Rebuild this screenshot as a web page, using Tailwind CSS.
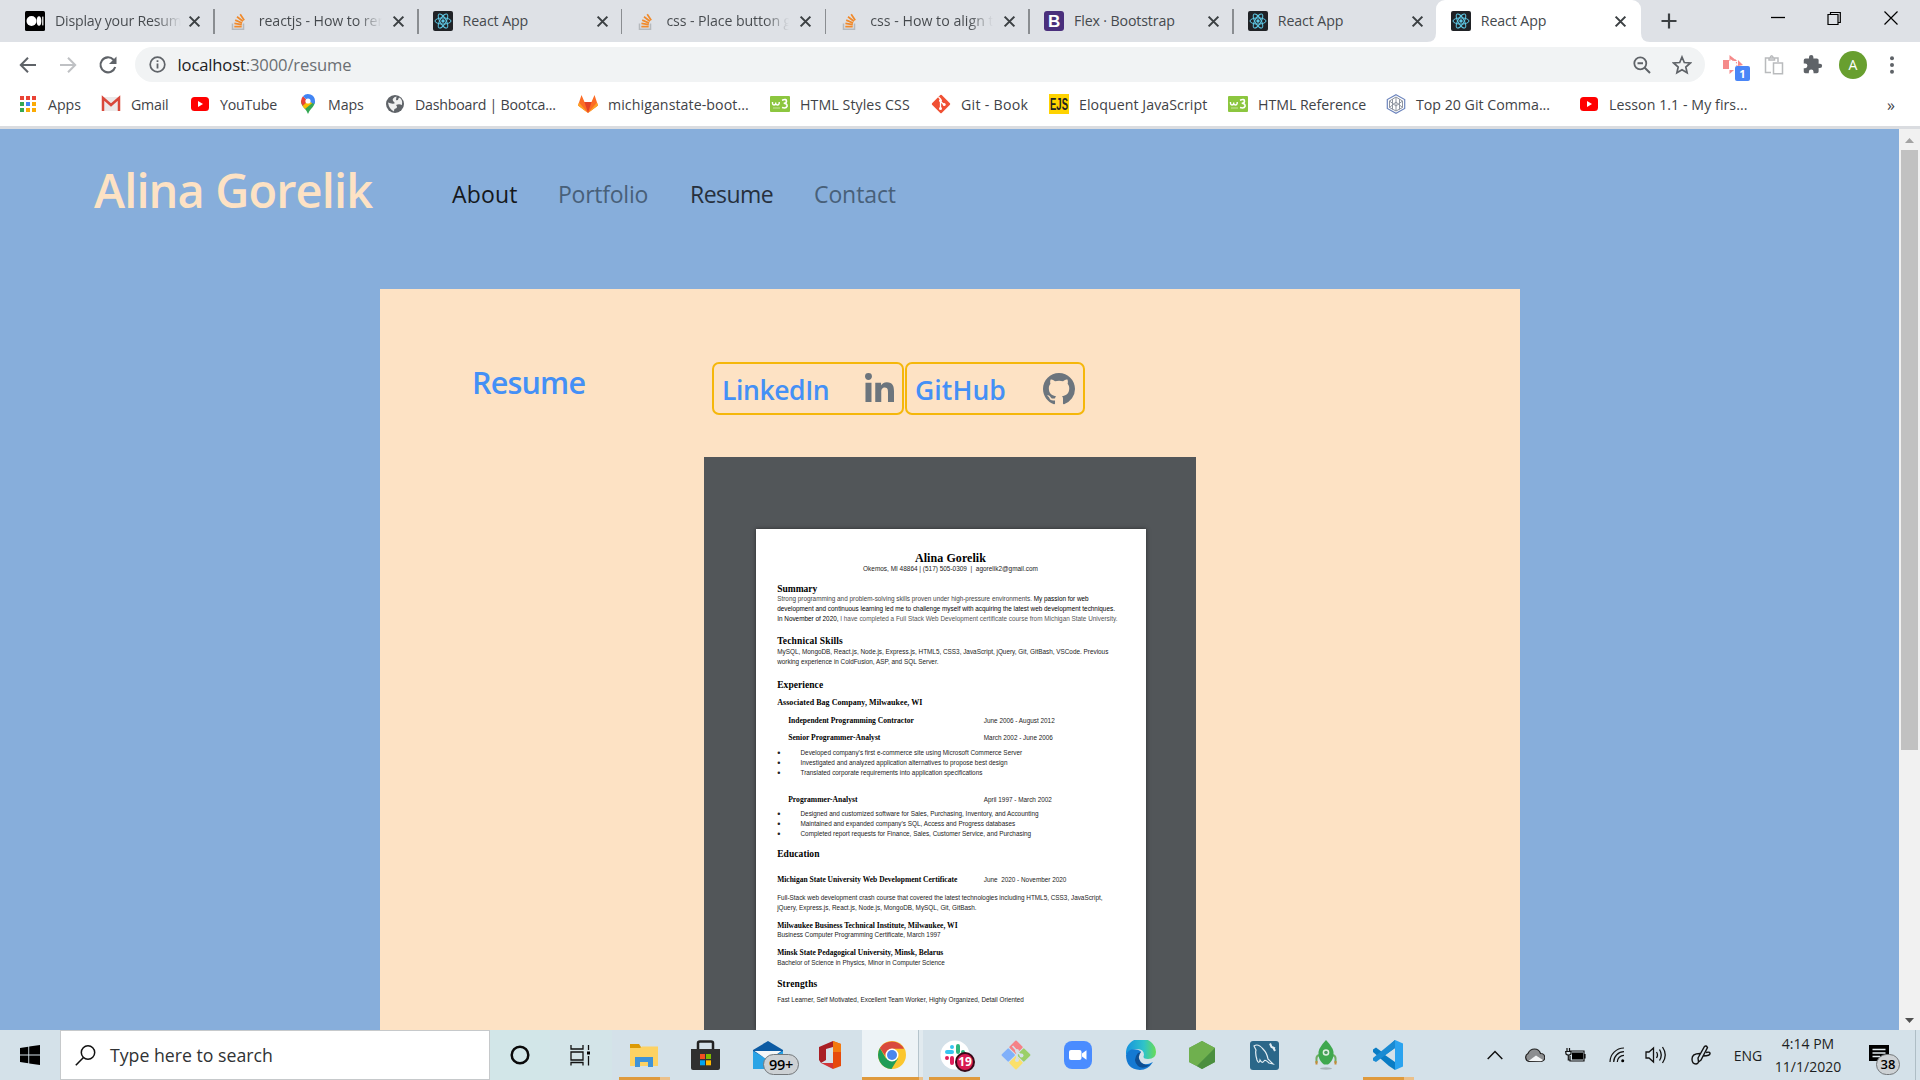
<!DOCTYPE html>
<html lang="en">
<head>
<meta charset="utf-8">
<title>React App</title>
<script src="https://cdn.jsdelivr.net/npm/@tailwindcss/browser@4"></script>
</head>
<body class="w-[1920px] h-[1080px] overflow-hidden flex flex-col font-['Open_Sans',sans-serif] bg-white">

<svg class="hidden">
  <defs>
    <symbol id="react" viewBox="0 0 20 20"><rect width="20" height="20" rx="2" fill="#202226"/><g fill="none" stroke="#5fc9e6" stroke-width="1"><ellipse cx="10" cy="10" rx="8" ry="3.1"/><ellipse cx="10" cy="10" rx="8" ry="3.1" transform="rotate(60 10 10)"/><ellipse cx="10" cy="10" rx="8" ry="3.1" transform="rotate(120 10 10)"/></g><circle cx="10" cy="10" r="1.7" fill="#5fc9e6"/></symbol>
    <symbol id="so" viewBox="0 0 20 20"><path d="M3.500 12.500V18.300H14.500V12.500" fill="none" stroke="#b5b9bd" stroke-width="1.500"/><g stroke="#f08a2c" stroke-width="1.700"><path d="M5.300 15.600H12.700M5.400 12.400L12.800 13.600M6.200 9.100L13.100 12M8 5.800L13.900 10.300M11.200 3.200L15.200 9.200"/></g></symbol>
    <symbol id="x" viewBox="0 0 12 12"><path d="M1.500 1.500L10.500 10.500M10.500 1.500L1.500 10.500" stroke="#3c4043" stroke-width="1.900"/></symbol>
    <symbol id="w3" viewBox="0 0 20 20"><rect y="2" width="20" height="16" rx="1" fill="#8cc63f"/><path d="M2.500 8V9.300Q2.500 11 4 11T5.700 9.300V8.500V9.300Q5.700 11 7.300 11T9.200 9.300V8" fill="none" stroke="#fff" stroke-width="1.400"/><path d="M12 6.200Q16.700 4.500 16.500 7.300Q16.200 9.300 13.700 9.300Q17.400 9.500 17.100 12.300Q16.200 14.800 12 13.600" fill="none" stroke="#fff" stroke-width="1.600"/><path d="M3 14H10" stroke="#c6e39d"/></symbol>
    <symbol id="yt" viewBox="0 0 20 20"><rect x="1" y="3" width="18" height="14" rx="3.500" fill="#f00"/><path d="M8 7V13L13 10Z" fill="#fff"/></symbol>
  </defs>
</svg>

<!-- tab strip -->
<div class="h-[42px] bg-[#dee1e6] flex pl-[11px] text-[14.2px] tracking-[-0.1px] text-[#45494d] shrink-0">
  <div class="w-[203.8px] flex items-center pl-[14px] relative">
    <svg class="size-5 shrink-0" viewBox="0 0 20 20"><rect width="20" height="20" rx="1.500"/><circle cx="6.500" cy="10" r="5" fill="#fff"/><ellipse cx="14" cy="10" rx="2.300" ry="4.700" fill="#fff"/><rect x="17.200" y="5.600" width="1.200" height="8.800" fill="#fff"/></svg>
    <span class="ml-[10px] w-[126px] tracking-[-0.23px] overflow-hidden whitespace-nowrap bg-gradient-to-r from-[#45494d] from-80% to-transparent bg-clip-text text-transparent">Display your Resume</span>
    <svg class="size-[13px] ml-[7px] shrink-0"><use href="#x"/></svg><i class="absolute right-0 top-[9px] w-[1.500px] h-[25px] bg-[#8a8d91]"></i>
  </div>
  <div class="w-[203.8px] flex items-center pl-[14px] relative">
    <svg class="size-5 shrink-0"><use href="#so"/></svg>
    <span class="ml-[10px] w-[123px] overflow-hidden whitespace-nowrap bg-gradient-to-r from-[#45494d] from-80% to-transparent bg-clip-text text-transparent">reactjs - How to render</span>
    <svg class="size-[13px] ml-[10px] shrink-0"><use href="#x"/></svg><i class="absolute right-0 top-[9px] w-[1.500px] h-[25px] bg-[#8a8d91]"></i>
  </div>
  <div class="w-[203.8px] flex items-center pl-[14px] relative">
    <svg class="size-5 shrink-0"><use href="#react"/></svg>
    <span class="ml-[10px] w-[124px]">React App</span>
    <svg class="size-[13px] ml-[9px] shrink-0"><use href="#x"/></svg><i class="absolute right-0 top-[9px] w-[1.500px] h-[25px] bg-[#8a8d91]"></i>
  </div>
  <div class="w-[203.8px] flex items-center pl-[14px] relative">
    <svg class="size-5 shrink-0"><use href="#so"/></svg>
    <span class="ml-[10px] w-[123px] overflow-hidden whitespace-nowrap bg-gradient-to-r from-[#45494d] from-80% to-transparent bg-clip-text text-transparent">css - Place button go</span>
    <svg class="size-[13px] ml-[10px] shrink-0"><use href="#x"/></svg><i class="absolute right-0 top-[9px] w-[1.500px] h-[25px] bg-[#8a8d91]"></i>
  </div>
  <div class="w-[203.8px] flex items-center pl-[14px] relative">
    <svg class="size-5 shrink-0"><use href="#so"/></svg>
    <span class="ml-[10px] w-[123px] tracking-[0px] overflow-hidden whitespace-nowrap bg-gradient-to-r from-[#45494d] from-80% to-transparent bg-clip-text text-transparent">css - How to align the</span>
    <svg class="size-[13px] ml-[10px] shrink-0"><use href="#x"/></svg><i class="absolute right-0 top-[9px] w-[1.500px] h-[25px] bg-[#8a8d91]"></i>
  </div>
  <div class="w-[203.8px] flex items-center pl-[14px] relative">
    <svg class="size-5 shrink-0" viewBox="0 0 20 20"><rect width="20" height="20" rx="3" fill="#4a2f7c"/><text x="10" y="16" text-anchor="middle" font-family="Liberation Sans" font-weight="700" font-size="17" fill="#fff">B</text></svg>
    <span class="ml-[10px] w-[124px] tracking-[-0.13px]">Flex · Bootstrap</span>
    <svg class="size-[13px] ml-[9px] shrink-0"><use href="#x"/></svg><i class="absolute right-0 top-[9px] w-[1.500px] h-[25px] bg-[#8a8d91]"></i>
  </div>
  <div class="w-[202px] flex items-center pl-[14px]">
    <svg class="size-5 shrink-0"><use href="#react"/></svg>
    <span class="ml-[10px] w-[124px]">React App</span>
    <svg class="size-[13px] ml-[9px] shrink-0"><use href="#x"/></svg>
  </div>
  <div class="w-[205px] flex items-center pl-[15px] bg-white rounded-t-[9px] relative">
    <svg class="absolute bottom-0 -left-[9px] size-[9px]" viewBox="0 0 9 9"><path d="M9 0V9H0Q9 9 9 0Z" fill="#fff"/></svg>
    <svg class="absolute bottom-0 -right-[9px] size-[9px]" viewBox="0 0 9 9"><path d="M0 0V9H9Q0 9 0 0Z" fill="#fff"/></svg>
    <svg class="size-5 shrink-0"><use href="#react"/></svg>
    <span class="ml-[10px] w-[124px]">React App</span>
    <svg class="size-[13px] ml-[9px] shrink-0"><use href="#x"/></svg>
  </div>
  <svg class="size-4 ml-[20px] mt-[13px]" viewBox="0 0 16 16"><path d="M8 .5V15.500M.5 8H15.500" stroke="#3c4043" stroke-width="2.200"/></svg>
  <div class="ml-auto flex pt-[10px] pr-[22px] gap-[42px]">
    <svg class="w-[14px] h-[16px]" viewBox="0 0 14 16"><path d="M0 7.500H14" stroke="#000" stroke-width="1.300"/></svg>
    <svg class="w-[15px] h-[16px]" viewBox="0 0 15 16"><path d="M1 4.500H11V14.500H1ZM3.500 4.500V2.500H13.300V12.500H11" fill="none" stroke="#000" stroke-width="1.200"/></svg>
    <svg class="w-[14px] h-[16px]" viewBox="0 0 14 16"><path d="M.5 1.500L13.500 14.500M13.500 1.500L.5 14.500" stroke="#000" stroke-width="1.200"/></svg>
  </div>
</div>

<!-- address bar -->
<div class="h-[45px] flex items-center pl-[19px] shrink-0">
  <svg class="size-[18px]" viewBox="0 0 18 18"><path d="M17 9H2M9 1.800L1.800 9L9 16.200" fill="none" stroke="#5f6368" stroke-width="2"/></svg>
  <svg class="size-[18px] ml-[22px]" viewBox="0 0 18 18"><path d="M1 9H16M9 1.800L16.200 9L9 16.200" fill="none" stroke="#bfc1c4" stroke-width="2"/></svg>
  <svg class="size-[20px] ml-[21px]" viewBox="0 0 20 20"><path d="M17.200 12A7.500 7.500 0 1 1 15.500 4.700L17 6.300" fill="none" stroke="#5f6368" stroke-width="2.100"/><path d="M18.500 1.500V9H11Z" fill="#5f6368"/></svg>
  <div class="ml-[17px] w-[1570px] h-[35px] rounded-full bg-[#f1f3f4] flex items-center pl-[14px] pr-[13px]">
    <svg class="size-[17px]" viewBox="0 0 17 17"><circle cx="8.500" cy="8.500" r="7.300" fill="none" stroke="#5f6368" stroke-width="1.700"/><path d="M8.500 7.500V12.500M8.500 4.300V6" stroke="#5f6368" stroke-width="1.800"/></svg>
    <span class="ml-[11.500px] mt-px text-[16.6px] tracking-[-0.14px] text-[#6b6f73]"><span class="text-[#202124]">localhost</span>:3000/resume</span>
    <svg class="ml-auto size-[18px]" viewBox="0 0 18 18"><circle cx="7.300" cy="7.300" r="6" fill="none" stroke="#5f6368" stroke-width="1.800"/><path d="M11.500 11.500L17 17M4.500 7.300H10" stroke="#5f6368" stroke-width="2"/></svg>
    <svg class="ml-[21px] size-[20px]" viewBox="0 0 20 20"><path d="M10 2L12.300 7.500L18.300 8L13.800 12L15.100 17.800L10 14.700L4.900 17.800L6.200 12L1.700 8L7.700 7.500Z" fill="none" stroke="#5f6368" stroke-width="1.700"/></svg>
  </div>
  <div class="relative ml-[17px] size-[22px]">
    <svg class="size-[22px]" viewBox="0 0 22 22"><path d="M1 6H7V15H1ZM7.500 1L15 7H12L7.500 5ZM7.500 20V16H12ZM16 6L21 11L16 12Z" fill="#f58a8a"/><path d="M7 6L14 6L15 12" fill="none" stroke="#f58a8a" stroke-width="1" stroke-dasharray="1.500 1.500"/></svg>
    <span class="absolute left-[13px] top-[12px] w-[15px] h-[15px] rounded-[2px] bg-[#4a86f7] text-white text-[11px] font-bold leading-[15px] text-center">1</span>
  </div>
  <svg class="ml-[20px] size-[20px]" viewBox="0 0 20 20"><path d="M7 17.500H1.500V3H14V7M5 3V5H10.500V3M6 3Q7.500 -1.500 9.500 3M9.500 8H18.500V18.800H9.500Z" fill="none" stroke="#b9bbbd" stroke-width="1.500"/></svg>
  <svg class="ml-[18px] size-[21px]" viewBox="0 0 24 24"><path fill="#5f6368" d="M20.500 11H19V7c0-1.100-.9-2-2-2h-4V3.500a2.500 2.500 0 0 0-5 0V5H4a2 2 0 0 0-2 2v3.800h1.500a2.700 2.700 0 0 1 0 5.400H2V20c0 1.100.9 2 2 2h3.800v-1.500a2.700 2.700 0 0 1 5.400 0V22H17a2 2 0 0 0 2-2v-4h1.500a2.500 2.500 0 0 0 0-5z"/></svg>
  <span class="ml-[16px] size-7 rounded-full bg-[#689f2f] text-white text-[14px] leading-7 text-center">A</span>
  <svg class="ml-[22px] w-[6px] h-[18px]" viewBox="0 0 6 18"><g fill="#5f6368"><circle cx="3" cy="2.300" r="2"/><circle cx="3" cy="9" r="2"/><circle cx="3" cy="15.700" r="2"/></g></svg>
</div>

<!-- bookmarks bar -->
<div class="h-[42px] flex items-center pl-[18px] pb-[4px] text-[14.2px] text-[#3f4347] border-b-3 border-[#dadce0] whitespace-nowrap shrink-0">
  <div class="w-[83px] flex items-center gap-[10px]"><svg class="size-5 shrink-0" viewBox="0 0 20 20"><path d="M2 2h4v4H2zM8 2h4v4H8zM14 2h4v4h-4z" fill="#ea4335"/><path d="M2 8h4v4H2zM2 14h4v4H2z" fill="#34a853"/><path d="M8 8h4v4H8z" fill="#4285f4"/><path d="M14 8h4v4h-4zM8 14h4v4H8zM14 14h4v4h-4z" fill="#fbab05"/></svg><span class="tracking-[-0.05px]">Apps</span></div>
  <div class="w-[89px] flex items-center gap-[10px] tracking-[-0.2px]"><svg class="size-5 shrink-0" viewBox="0 0 20 20"><rect x="1" y="3" width="18" height="14" fill="#eceaea"/><path d="M2 17V4L10 11L18 4V17" fill="none" stroke="#d9483b" stroke-width="2.500"/></svg><span>Gmail</span></div>
  <div class="w-[108px] flex items-center gap-[10px] tracking-[-0.2px]"><svg class="size-5 shrink-0"><use href="#yt"/></svg><span>YouTube</span></div>
  <div class="w-[87px] flex items-center gap-[10px] tracking-[-0.1px]"><svg class="size-5 shrink-0" viewBox="0 0 20 20"><path d="M3 7Q3 11 7 15Q9 17 10 20Q11 17 13 15Q17 11 17 7Z" fill="#34a853"/><path d="M3 7A7 7 0 0 1 5 2.200L10 7L5 12Q3 10 3 7Z" fill="#ea4335"/><path d="M10 7L4.500 12L7 15L15.500 8Z" fill="#fbbc04"/><path d="M5 2.200A7 7 0 0 1 17 7Q17 8.500 16.300 10L10 7Z" fill="#4285f4"/><circle cx="10" cy="7" r="2.600" fill="#fff"/></svg><span>Maps</span></div>
  <div class="w-[193px] flex items-center gap-[10px] tracking-[-0.23px]"><svg class="size-5 shrink-0" viewBox="0 0 20 20"><circle cx="10" cy="10" r="9" fill="#5f6368"/><path d="M11.500 2.500Q6.500 4 8 7Q10 8 9.500 9.500Q6 10 3 8.500Q4 15 9 17.500Q9 14 11 14.500Q13 13 11 11Q14 9.500 17 11Q18 5 14 3.500Q13 7 11 6Z" fill="#fff" opacity=".9"/></svg><span>Dashboard | Bootca...</span></div>
  <div class="w-[192px] flex items-center gap-[10px] tracking-[0.07px]"><svg class="size-5 shrink-0" viewBox="0 0 20 20"><path d="M10 19L0 11.500L3.500 1L6.500 8H13.500L16.500 1L20 11.500Z" fill="#fc6d26"/><path d="M10 19L6.500 8H13.500Z" fill="#e24329"/><path d="M10 19L0 11.500L1 8.500ZM10 19L20 11.500L19 8.500Z" fill="#fca326"/></svg><span>michiganstate-boot...</span></div>
  <div class="w-[161px] flex items-center gap-[10px] tracking-[0.08px]"><svg class="size-5 shrink-0"><use href="#w3"/></svg><span>HTML Styles CSS</span></div>
  <div class="w-[118px] flex items-center gap-[10px] tracking-[0.27px]"><svg class="size-5 shrink-0" viewBox="0 0 20 20"><rect x="3.200" y="3.200" width="13.600" height="13.600" rx="1" transform="rotate(45 10 10)" fill="#f05033"/><path d="M7.500 3L9.500 5V15M9.500 7.500L13 10.500" fill="none" stroke="#fff" stroke-width="1.300"/><g fill="#fff"><circle cx="9.500" cy="6.500" r="1.500"/><circle cx="9.500" cy="14.500" r="1.500"/><circle cx="13.200" cy="10.500" r="1.500"/></g></svg><span>Git - Book</span></div>
  <div class="w-[179px] flex items-center gap-[10px] tracking-[0.06px]"><svg class="size-5 shrink-0" viewBox="0 0 20 20"><rect width="20" height="20" fill="#ffd300"/><text x="10" y="15.800" text-anchor="middle" textLength="18" lengthAdjust="spacingAndGlyphs" font-family="Liberation Sans" font-weight="700" font-size="16.500" fill="#222">EJS</text></svg><span>Eloquent JavaScript</span></div>
  <div class="w-[158px] flex items-center gap-[10px] tracking-[-0.05px]"><svg class="size-5 shrink-0"><use href="#w3"/></svg><span>HTML Reference</span></div>
  <div class="w-[193px] flex items-center gap-[10px]"><svg class="size-5 shrink-0" viewBox="0 0 20 20"><path d="M10 .8L18.700 5.500V14.500L10 19.200L1.300 14.500V5.500Z" fill="none" stroke="#6d85bd" stroke-width="1.200"/><path d="M10 3L16.500 7V13.500L10 17L3.500 13.500V7ZM10 3V17M3.500 7L10 12L16.500 7M3.500 13.500L10 8L16.500 13.500M6.500 5V15.500M13.500 5V15.500" fill="none" stroke="#8f959f" stroke-width="1"/></svg><span>Top 20 Git Comma...</span></div>
  <div class="flex items-center gap-[10px] tracking-[0.05px]"><svg class="size-5 shrink-0"><use href="#yt"/></svg><span>Lesson 1.1 - My firs...</span></div>
  <span class="ml-auto mr-[25px] text-[16px] leading-4">»</span>
</div>

<!-- page -->
<div class="flex-1 flex min-h-0">
  <main class="w-[1899px] bg-[#87aedb] overflow-hidden flex flex-col items-center">
    <nav class="w-full h-[160px] flex items-start pl-[94px] shrink-0">
      <h1 class="w-[358px] mt-[31px] leading-[60px] text-[47px] font-semibold tracking-[-0.9px] text-[#fde2c4]">Alina Gorelik</h1>
      <div class="flex mt-[45px] leading-[40px] text-[23px]">
        <a class="w-[106px] text-[#15181c] tracking-[0.2px]">About</a>
        <a class="w-[132px] text-[#486079] tracking-[-0.25px]">Portfolio</a>
        <a class="w-[124px] text-[#26303d] tracking-[-0.56px]">Resume</a>
        <a class="text-[#486079] tracking-[-0.1px]">Contact</a>
      </div>
    </nav>
    <section class="ml-[1px] w-[1140px] h-[741px] bg-[#fde2c4] flex flex-col items-center shrink-0">
      <div class="w-full h-[168px] flex items-start pl-[92px] shrink-0 font-semibold text-[#4490f6]">
        <h2 class="w-[240px] mt-[73px] leading-[40px] text-[30.5px] tracking-[-0.8px]">Resume</h2>
        <div class="flex gap-px mt-[73px] text-[26.500px]">
          <a class="w-[192px] h-[53px] rounded-[7px] border-2 border-[#f5b70a] flex pl-[8px] pr-[8px] justify-between">
            <span class="leading-[53px] h-[49px] tracking-[-0.4px]">LinkedIn</span>
            <svg class="w-[29px] h-[29px] mt-[9px]" viewBox="0 0 448 448" fill="#6c757d"><path d="M100.280 448H7.400V148.900h92.880zM53.790 108.100C24.090 108.100 0 83.500 0 53.800a53.790 53.790 0 0 1 107.580 0c0 29.700-24.100 54.300-53.790 54.300zM447.900 448h-92.680V302.400c0-34.700-.7-79.200-48.290-79.200-48.290 0-55.690 37.700-55.690 76.700V448h-92.780V148.900h89.080v40.800h1.300c12.400-23.500 42.690-48.300 87.880-48.300 94 0 111.280 61.900 111.280 142.300V448z"/></svg>
          </a>
          <a class="w-[180px] h-[53px] rounded-[7px] border-2 border-[#f5b70a] flex pl-[8px] pr-[8px] justify-between">
            <span class="leading-[53px] h-[49px] tracking-[0.1px]">GitHub</span>
            <svg class="w-[32px] h-[32px] mt-[9px]" viewBox="0 0 16 16" fill="#6c757d"><path d="M8 0C3.580 0 0 3.580 0 8c0 3.540 2.290 6.530 5.470 7.590.4.070.55-.17.55-.38 0-.19-.01-.82-.01-1.490-2.010.37-2.530-.49-2.690-.94-.09-.23-.48-.94-.82-1.130-.28-.15-.68-.52-.01-.53.63-.01 1.080.58 1.230.82.72 1.210 1.870.87 2.330.66.070-.52.28-.87.51-1.070-1.780-.2-3.640-.89-3.640-3.950 0-.87.31-1.590.82-2.150-.08-.2-.36-1.020.08-2.120 0 0 .67-.21 2.200.82.64-.18 1.320-.27 2-.27s1.360.09 2 .27c1.530-1.040 2.200-.82 2.200-.82.44 1.100.16 1.920.08 2.120.51.56.82 1.270.82 2.150 0 3.070-1.870 3.750-3.650 3.950.29.25.54.73.54 1.480 0 1.070-.01 1.930-.01 2.200 0 .21.15.46.55.38A8.010 8.010 0 0 0 16 8c0-4.420-3.580-8-8-8z"/></svg>
          </a>
        </div>
      </div>
      <!-- embedded document -->
      <div class="w-[492px] flex-1 bg-[#525659] pt-[72px] flex justify-center">
        <article class="w-[390px] ml-[1px] bg-white shadow-[0_0_4px_rgba(0,0,0,.5)] pt-[24px] pl-[21.700px] font-['Liberation_Sans',sans-serif] text-[6.380px] leading-[10px] text-[#222] [&_b]:whitespace-pre [&_p]:whitespace-pre [&_b]:block [&_b]:h-[10px] [&_b]:text-black [&_b]:font-['Liberation_Serif',serif] [&_p]:h-[10px]">
          <b class="-ml-[21.700px] text-center text-[12px] tracking-[0.07px]">Alina Gorelik</b>
          <p class="-ml-[21.700px] text-center mt-[0.500px] text-[6.460px]">Okemos, MI 48864 | (517) 505-0309  |  agorelik2@gmail.com</p>
          <b class="mt-[10px] text-[9.500px]">Summary</b>
          <p class="text-[#444]">Strong programming and problem-solving skills proven under high-pressure environments. <span class="text-black">My passion for web</span></p>
          <p class="text-black">development and continuous learning led me to challenge myself with acquiring the latest web development techniques.</p>
          <p class="text-[#555]"><span class="text-black">In November of 2020,</span> I have completed a Full Stack Web Development certificate course from Michigan State University.</p>
          <b class="mt-[12px] text-[9.500px] tracking-[0.15px]">Technical Skills</b>
          <p class="mt-[1.500px]">MySQL, MongoDB, React.js, Node.js, Express.js, HTML5, CSS3, JavaScript, jQuery, Git, GitBash, VSCode. Previous</p>
          <p>working experience in ColdFusion, ASP, and SQL Server.</p>
          <b class="mt-[13px] text-[9.500px] tracking-[0.06px]">Experience</b>
          <b class="mt-[8px] text-[8px] tracking-[0.05px]">Associated Bag Company, Milwaukee, WI</b>
          <div class="mt-[7.500px] flex pl-[11px]"><b class="w-[195.600px] text-[7.550px]">Independent Programming Contractor</b><p>June 2006 - August 2012</p></div>
          <div class="mt-[7px] flex pl-[11px]"><b class="w-[195.600px] text-[7.620px]">Senior Programmer-Analyst</b><p>March 2002 - June 2006</p></div>
          <div class="mt-[5px] flex"><p class="w-[23.300px] text-[9px]">•</p><p>Developed company’s first e-commerce site using Microsoft Commerce Server</p></div>
          <div class="flex"><p class="w-[23.300px] text-[9px]">•</p><p>Investigated and analyzed application alternatives to propose best design</p></div>
          <div class="flex"><p class="w-[23.300px] text-[9px]">•</p><p>Translated corporate requirements into application specifications</p></div>
          <div class="mt-[17px] flex pl-[11px]"><b class="w-[195.600px] text-[7.620px]">Programmer-Analyst</b><p>April 1997 - March 2002</p></div>
          <div class="mt-[4px] flex"><p class="w-[23.300px] text-[9px]">•</p><p>Designed and customized software for Sales, Purchasing, Inventory, and Accounting</p></div>
          <div class="flex"><p class="w-[23.300px] text-[9px]">•</p><p>Maintained and expanded company’s SQL, Access and Progress databases</p></div>
          <div class="flex"><p class="w-[23.300px] text-[9px]">•</p><p>Completed report requests for Finance, Sales, Customer Service, and Purchasing</p></div>
          <b class="mt-[10px] text-[9.500px] tracking-[0.07px]">Education</b>
          <div class="mt-[16px] flex"><b class="w-[206.600px] text-[7.500px]">Michigan State University Web Development Certificate</b><p>June  2020 - November 2020</p></div>
          <p class="mt-[8.500px]">Full-Stack web development crash course that covered the latest technologies including HTML5, CSS3, JavaScript,</p>
          <p>jQuery, Express.js, React.js, Node.js, MongoDB, MySQL, Git, GitBash.</p>
          <b class="mt-[8px] text-[7.560px]">Milwaukee Business Technical Institute, Milwaukee, WI</b>
          <p class="-mt-px">Business Computer Programming Certificate, March 1997</p>
          <b class="mt-[8px] text-[7.500px]">Minsk State Pedagogical University, Minsk, Belarus</b>
          <p>Bachelor of Science in Physics, Minor in Computer Science</p>
          <b class="mt-[11px] text-[9.500px] tracking-[0.15px]">Strengths</b>
          <p class="mt-[6px]">Fast Learner, Self Motivated, Excellent Team Worker, Highly Organized, Detail Oriented</p>
        </article>
      </div>
    </section>
  </main>
  <div class="w-[21px] bg-[#f1f1f1] flex flex-col items-center justify-between pt-[9px] pb-[7px]">
    <div class="flex flex-col items-center w-full">
      <svg class="w-[9px] h-[5px]" viewBox="0 0 9 5"><path d="M0 5L4.500 0L9 5Z" fill="#a3a3a3"/></svg>
      <i class="mt-[7px] w-[17px] h-[600px] bg-[#c1c1c1]"></i>
    </div>
    <svg class="w-[9px] h-[5px]" viewBox="0 0 9 5"><path d="M0 0L4.500 5L9 0Z" fill="#505050"/></svg>
  </div>
</div>

<!-- taskbar -->
<div class="h-[50px] bg-[#d4e1e9] flex items-stretch shrink-0 [&>div]:flex [&>div]:items-center [&>div]:justify-center [&>div]:shrink-0">
  <div class="w-[60px]"><svg class="size-5" viewBox="0 0 20 20"><path d="M0 3L8.300 1.700V9.500H0ZM9.200 1.600L20 0V9.500H9.200ZM0 10.400H8.300V18.300L0 17.100ZM9.200 10.400H20V20L9.200 18.400Z"/></svg></div>
  <div class="w-[430px] bg-white border border-[#c6c9cb] justify-start! pl-[14px]"><svg class="size-[21px]" viewBox="0 0 21 21"><circle cx="13" cy="7.500" r="6.700" fill="none" stroke="#111" stroke-width="1.500"/><path d="M8.500 12.500L.8 20.200" stroke="#111" stroke-width="1.600"/></svg><span class="ml-[14px] text-[17.700px] text-[#303234]">Type here to search</span></div>
  <div class="w-[60px] bg-[#d2e6e8]"><svg class="size-[20px]" viewBox="0 0 20 20"><circle cx="10" cy="10" r="8.300" fill="none" stroke="#0a0a0a" stroke-width="2.500"/></svg></div>
  <div class="w-[62px] bg-[#d3e4e8]"><svg class="size-[21px] -ml-[1px]" viewBox="0 0 21 21"><path d="M1 0V4H13V0M1 7H13V15H1ZM1 20.500V17.500H13V20.500M18.500 0V5M18.500 11V20.500" fill="none" stroke="#111" stroke-width="1.300"/><rect x="17" y="6.500" width="3" height="3"/></svg></div>
  <div class="w-[62px] relative"><svg class="w-[28px] h-[24px] ml-[2px]" viewBox="0 0 28 24"><path d="M0 1H9L11 4H27V22H0Z" fill="#dc9a06"/><path d="M0 5H10L12 3.500H28V23H0Z" fill="#fdd263"/><path d="M5 24V14H23V24H18V19H10V24Z" fill="#3f93d8"/></svg><i class="absolute left-[7px] bottom-0 w-[41px] h-[3px] bg-[#df9a3d]"></i><i class="absolute left-[48px] bottom-0 w-[10px] h-[3px] bg-[#ebc08a]"></i></div>
  <div class="w-[62px] pl-[2px]"><svg class="w-[30px] h-[31px]" viewBox="0 0 30 31"><path d="M7 9V3Q7 1.500 9 1.500H20Q22 1.500 22 3V9" fill="none" stroke="#222" stroke-width="2.500"/><path d="M0 9H29V28Q29 30 27 30H2Q0 30 0 28Z" fill="#303030"/><path d="M9 14h5v5H9z" fill="#f25022"/><path d="M15 14h5v5h-5z" fill="#7fba00"/><path d="M9 20.300h5v5H9z" fill="#00a4ef"/><path d="M15 20.300h5v5h-5z" fill="#ffb900"/></svg></div>
  <div class="w-[62px] relative pl-[2px]"><svg class="w-[30px] h-[28px]" viewBox="0 0 30 28"><path d="M0 9L15 0L30 9V28H0Z" fill="#0d5ba3"/><path d="M0 10L15 19L30 10V28H0Z" fill="#2ba4e6"/><path d="M1.500 10H28.500L17 18Q15 19 13 18Z" fill="#f4f7f9"/></svg><span class="absolute left-[27px] top-[24px] w-[36px] h-[21px] rounded-full border border-[#73777a] bg-[#cdd1d4] text-[14.500px] leading-[19px] font-semibold text-center text-black tracking-[-0.3px]">99+</span></div>
  <div class="w-[62px] pl-[2px]"><svg class="w-[24px] h-[30px]" viewBox="0 0 24 30"><path d="M1 7L15 1V7L8 9V20L3 23L1 20Z" fill="#a91e24"/><path d="M15 1L23 4V26L15 29Z" fill="#e64a0c"/><path d="M15 1L23 4V12H15Z" fill="#f37a10"/><path d="M3 23H15V29Z" fill="#d13438"/></svg></div>
  <div class="w-[62px] relative pl-[2px]"><i class="absolute left-[2px] top-0 w-[56px] h-full bg-[#edf3f6]"></i><i class="absolute left-[58px] top-0 w-[5px] h-full bg-[#e1eaef] border-l border-[#b5c4cc]"></i><i class="absolute left-[2px] bottom-0 w-[57px] h-[3px] bg-[#df9a3d]"></i><i class="absolute left-[59px] bottom-0 w-[4px] h-[3px] bg-[#ebc08a]"></i>
    <svg class="size-[28px] relative" viewBox="0 0 28 28"><circle cx="14" cy="14" r="14" fill="#fbc62e"/><path d="M1.900 7A14 14 0 0 0 13.500 28L20 17.500L8 17.500Z" fill="#1f9d57"/><path d="M1.900 7A14 14 0 0 1 26.100 7.700H14A6.300 6.300 0 0 0 8 16Z" fill="#d94a3d"/><circle cx="14" cy="14" r="6.500" fill="#fff"/><circle cx="14" cy="14" r="5" fill="#4a86ee"/></svg></div>
  <div class="w-[62px] relative pl-[3px]"><i class="absolute left-[7px] bottom-0 w-[51px] h-[3px] bg-[#df9a3d]"></i><svg class="size-[30px]" viewBox="0 0 30 30"><circle cx="15" cy="15" r="14.500" fill="#fff"/><g stroke-width="4" stroke-linecap="round"><path d="M12 7V7.010M7 12H12" stroke="#36c5f0"/><path d="M18 6V12M23 12V12.010" stroke="#2eb67d"/><path d="M18 18H23" stroke="#ecb22e"/><path d="M12 18V23M7 18V18.010" stroke="#e01e5a"/></g></svg><span class="absolute left-[33px] top-[22px] size-[20px] rounded-full bg-[#d81b52] border-2 border-[#3a0918] text-white text-[12px] leading-[16px] font-bold text-center">19</span></div>
  <div class="w-[62px] pl-[2px]"><svg class="size-[30px]" viewBox="0 0 30 30"><g transform="rotate(45 15 15)"><rect x="4.500" y="4.500" width="10" height="10" rx="1" fill="#f58286"/><rect x="15.500" y="4.500" width="10" height="10" rx="1" fill="#9bcf69"/><rect x="4.500" y="15.500" width="10" height="10" rx="1" fill="#80b0fa"/><rect x="15.500" y="15.500" width="10" height="10" rx="1" fill="#fbe06a"/></g><path d="M11.500 6L16 11V21M16 12L20 15" fill="none" stroke="#d4e1e9" stroke-width="1.700"/><g fill="#d4e1e9"><circle cx="16" cy="11" r="2"/><circle cx="16" cy="20" r="2"/><circle cx="20.500" cy="15.500" r="2"/></g></svg></div>
  <div class="w-[62px] pl-[2px]"><svg class="size-[28px]" viewBox="0 0 28 28"><rect width="28" height="28" rx="8" fill="#4a8cff"/><rect x="5" y="9" width="12.500" height="10" rx="2" fill="#fff"/><path d="M18 12.500L22.500 9.200V18.800L18 15.500Z" fill="#fff"/></svg></div>
  <div class="w-[62px] pl-[3px]"><svg class="size-[30px]" viewBox="0 0 30 30"><defs><linearGradient id="eg"><stop offset="0" stop-color="#1793df"/><stop offset=".6" stop-color="#2fc3c9"/><stop offset="1" stop-color="#69dc55"/></linearGradient></defs><path d="M0 13A15 14 0 0 1 30 12Q30 19 22 19Q16 19 18 15Q18 9 11 9Q4 9 0 15Z" fill="url(#eg)"/><path d="M0 15Q3 8 10 9.500Q14 10 15 12Q9 15 13 21Q18 27 27 22Q22 30 14 30Q0 29 0 15Z" fill="#1479d2"/><path d="M12 13Q6 20 12 26Q17 30 25 24.500Q18 26 14.500 21.500Q11 17 15 12Z" fill="#0d4f94"/></svg></div>
  <div class="w-[62px] pl-[2px]"><svg class="w-[26px] h-[28px]" viewBox="0 0 26 28"><path d="M13 0L26 7V21L13 28L0 21V7Z" fill="#5fa04e"/><path d="M13 0L26 7L8 25L0 21V7Z" fill="#6fb04e"/><path d="M26 7V21L13 28L8 25Z" fill="#4b8f3f"/></svg></div>
  <div class="w-[62px] pl-[2px]"><svg class="size-[29px]" viewBox="0 0 29 29"><rect width="29" height="29" rx="3" fill="#2b6789"/><path d="M4 5Q8 2 13 8Q17 12 18 18L23 23L19 22Q15 18 14 20Q12 23 10 19Q9 24 7 19Q5 12 6 9Z" fill="none" stroke="#e4eef3" stroke-width="1.200"/><path d="M20 2.500L21.500 6L25 7.500M23 6L25 10" fill="none" stroke="#e4eef3" stroke-width="2"/></svg></div>
  <div class="w-[62px] pl-[2px]"><svg class="w-[22px] h-[30px]" viewBox="0 0 22 30"><ellipse cx="11" cy="28.500" rx="6" ry="1.200" fill="#a9b4b9"/><path d="M4 15Q1 16 1.500 20V23M18 15Q21 16 20.500 20V23" fill="none" stroke="#6fae62" stroke-width="2"/><path d="M11 0Q20 9 18.500 16Q17 22 13 24.500H9Q5 22 3.500 16Q2 9 11 0Z" fill="#3fa84e"/><circle cx="11" cy="12.500" r="3.300" fill="#dff0e0"/><circle cx="11" cy="12.500" r="1.800" fill="#4e9a62"/><path d="M1.500 21V24.500M20.500 21V24.500" stroke="#c58b3a" stroke-width="2"/></svg></div>
  <div class="w-[62px] relative pl-[2px]"><svg class="size-[30px]" viewBox="0 0 30 30"><path d="M22 0L9 12L3 7.500L0 9.500V12L16 26L22 30V22L12 15L22 8Z" fill="#0a7cc4"/><path d="M0 18L22 0V8L3 22L0 20.500Z" fill="#1a8bd3"/><path d="M22 0L30 3.500V26.500L22 30Z" fill="#2ba3ef"/></svg><i class="absolute left-[7px] bottom-0 w-[41px] h-[3px] bg-[#df9a3d]"></i><i class="absolute left-[48px] bottom-0 w-[10px] h-[3px] bg-[#ebc08a]"></i></div>
  <div class="ml-[58px] w-[38px]"><svg class="w-[16px] h-[10px]" viewBox="0 0 16 10"><path d="M.7 9L8 1.500L15.300 9" fill="none" stroke="#111" stroke-width="1.500"/></svg></div>
  <div class="w-[41px]"><svg class="w-[21px] h-[15px]" viewBox="0 0 21 15"><path d="M5 13.500A4.300 4.300 0 0 1 4 5.500Q6 1 10.500 1Q15 1 16.500 5.500A4 4 0 0 1 17 13.500Z" fill="#8c8e90" stroke="#222" stroke-width="1.200"/><path d="M4.500 13L12 7.500L19 12L17 13.200Z" fill="#f3f5f6"/></svg></div>
  <div class="w-[40px]"><svg class="w-[21px] h-[14px]" viewBox="0 0 21 14"><path d="M5 3H19V13H5V8M20 6V10.500M2 0V3M4.500 0V3M.7 3.500H6V6Q3.500 8.500 1 6ZM3.300 7V12H5" fill="none" stroke="#111" stroke-width="1.200"/><rect x="7" y="4.500" width="11" height="7"/></svg></div>
  <div class="w-[41px] pl-[2px]"><svg class="size-[16px]" viewBox="0 0 16 16"><g fill="none" stroke="#111" stroke-width="1.200"><path d="M1 15A14 14 0 0 1 15 1M4.700 15A10.300 10.300 0 0 1 15 4.700M8.300 15A6.700 6.700 0 0 1 15 8.300"/></g><circle cx="13.700" cy="13.700" r="1.500"/></svg></div>
  <div class="w-[40px]"><svg class="w-[22px] h-[18px]" viewBox="0 0 22 18"><path d="M1 6H4L8.500 2V16L4 12H1ZM11.500 6Q13.500 9 11.500 12M14.500 3.500Q18 9 14.500 14.500M17.500 1Q23 9 17.500 17" fill="none" stroke="#111" stroke-width="1.300"/></svg></div>
  <div class="w-[49px]"><svg class="w-[20px] h-[20px]" viewBox="0 0 20 20"><path d="M7 13L13.500 1.500Q15 0 16.500 2.500L10 15L7.500 17ZM9 8.500Q1 8.500 1 14Q1 19 5 19Q7 19 8 16M12 11Q19.500 11 19 8Q18.500 6.500 15 7.500" fill="none" stroke="#111" stroke-width="1.400"/></svg></div>
  <div class="w-[46px] text-[14px] text-[#1d1f21]">ENG</div>
  <div class="w-[82px] -ml-[4px] text-[14px] leading-[23px] text-center text-[#1d1f21] pb-[1px]"><span>4:14 PM<br>11/1/2020</span></div>
  <div class="ml-auto w-[68px] relative"><svg class="absolute left-[17px] top-[15px] w-[20px] h-[20px]" viewBox="0 0 20 20"><path d="M0 0H20V16H13L9 20V16H0Z"/><path d="M3.500 4.500H16.500M3.500 8H16.500M3.500 11.500H11" stroke="#e4edf1" stroke-width="1.400"/></svg><span class="absolute left-[24px] top-[24px] w-[24px] h-[21px] rounded-full border border-[#73777a] bg-[#cdd1d4] text-[13px] leading-[19px] font-semibold text-center">38</span><i class="absolute right-[4px] top-0 w-px h-full bg-[#aebdc5]"></i></div>
</div>
</body>
</html>
